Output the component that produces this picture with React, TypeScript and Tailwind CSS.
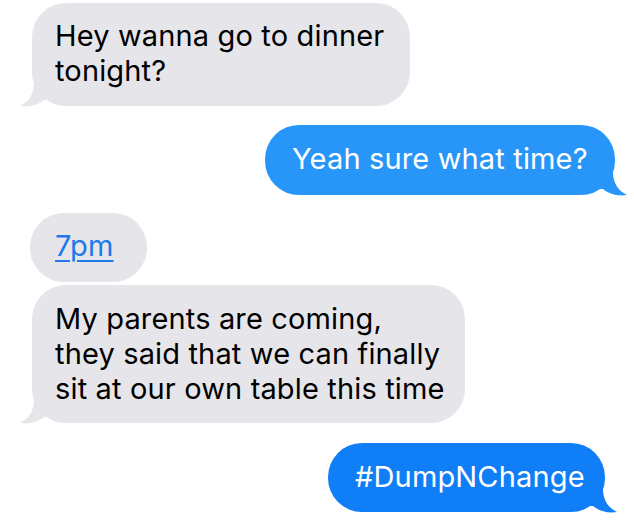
import React from "react";

const font = { fontFamily: "Inter, 'Liberation Sans', sans-serif" };

function Tail({ side, color }: { side: "left" | "right"; color: string }) {
  return (
    <svg
      width="30"
      height="24"
      viewBox="0 0 30 24"
      className={
        side === "left"
          ? "absolute left-[-12px] bottom-[-1px]"
          : "absolute right-[-12px] bottom-[-1px] -scale-x-100"
      }
    >
      <path
        d="M14 0 C14 12 8 19 0 23 C9 24.5 18 22 24 17 L30 17 L30 0 Z"
        fill={color}
      />
    </svg>
  );
}

export default function App() {
  return (
    <div
      className="w-[634px] h-[523px] bg-white flex flex-col pt-[3px] text-[29px] leading-[35px] tracking-[0.15px]"
      style={font}
    >
      <div className="relative ml-[32px] w-[378px] h-[103px] rounded-[34px] bg-[#e5e5ea] pl-[23px] pt-[15px] text-black">
        Hey wanna go to dinner
        <br />
        tonight?
        <Tail side="left" color="#e5e5ea" />
      </div>

      <div className="relative self-end mr-[19px] mt-[19px] w-[350px] h-[70px] rounded-[34px] bg-[#2796f8] pl-[27px] pt-[16px] text-white">
        Yeah sure what time?
        <Tail side="right" color="#2796f8" />
      </div>

      <div className="ml-[30px] mt-[18px] w-[117px] h-[69px] rounded-[34px] bg-[#e5e5ea] pl-[25px] pt-[15px]">
        <span className="text-[#1d7ae8] underline underline-offset-[4px] decoration-[1.5px]">
          7pm
        </span>
      </div>

      <div className="relative ml-[32px] mt-[3px] w-[433px] h-[138px] rounded-[34px] bg-[#e5e5ea] pl-[23px] pt-[16px] text-black">
        My parents are coming,
        <br />
        they said that we can finally
        <br />
        sit at our own table this time
        <Tail side="left" color="#e5e5ea" />
      </div>

      <div className="relative self-end mr-[29px] mt-[20px] w-[277px] h-[69px] rounded-[34px] bg-[#107ef6] pl-[27px] pt-[16px] text-white">
        #DumpNChange
        <Tail side="right" color="#107ef6" />
      </div>
    </div>
  );
}
